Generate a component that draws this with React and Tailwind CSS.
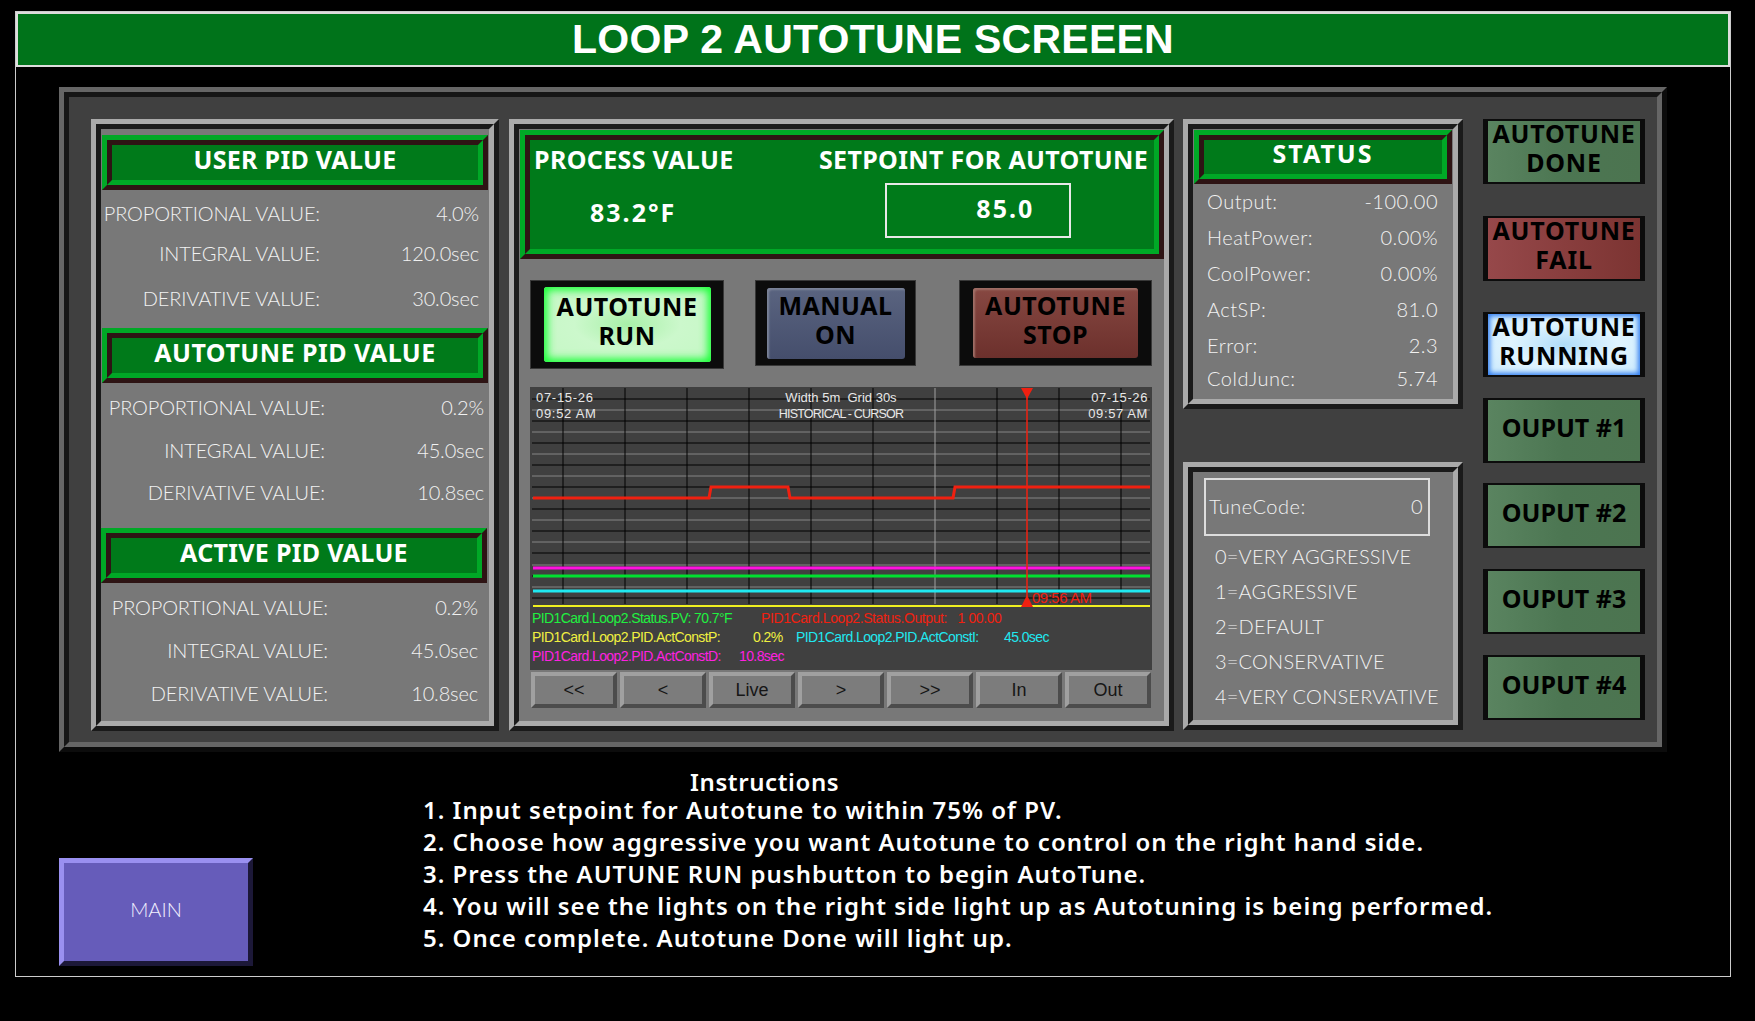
import React from "react";

const boldFont = "font-['Noto_Sans',sans-serif] font-bold";
const thinFont = "font-['Lato',sans-serif] font-light";

// Double bevel used by the gray panels
const GrayPanel = ({ className, children }) => (
  <div className={`border-[5px] border-t-[#aaaaaa] border-l-[#aaaaaa] border-r-[#1a1a1a] border-b-[#1a1a1a] ${className}`}>
    <div className="h-full border-[5px] border-t-[#1a1a1a] border-l-[#1a1a1a] border-r-[#aaaaaa] border-b-[#aaaaaa] bg-[#787878]">
      {children}
    </div>
  </div>
);

const GreenPanel = ({ className, children }) => (
  <div className={`border-[5px] border-t-[#00a826] border-l-[#00a826] border-r-[#2e1414] border-b-[#2e1414] ${className}`}>
    <div className="h-full border-[5px] border-t-[#2e1414] border-l-[#2e1414] border-r-[#00a826] border-b-[#00a826] bg-[#007a1a]">
      {children}
    </div>
  </div>
);

const GreenTitle = ({ className, children, tracking = "tracking-[0.3px]" }) => (
  <GreenPanel className={className}>
    <div className={`flex h-full items-center justify-center text-white text-[25px] leading-none pb-[7px] ${tracking} ${boldFont}`}>
      {children}
    </div>
  </GreenPanel>
);

const PidRow = ({ label, value, labelWidth, valueClass, className }) => (
  <div className={`flex items-center text-[#f2f2f2] text-[20px] tracking-[-0.15px] whitespace-nowrap ${thinFont} ${className}`}>
    <div className={`text-right ${labelWidth}`}>{label}</div>
    <div className={`flex-1 text-right ${valueClass}`}>{value}</div>
  </div>
);

const StatusRow = ({ label, value, className }) => (
  <div className={`flex items-center justify-between text-[#f2f2f2] text-[20px] tracking-[0.5px] pl-[4px] pr-[4px] ${thinFont} ${className}`}>
    <span>{label}</span>
    <span>{value}</span>
  </div>
);

const LeftColumn = () => (
  <GrayPanel className="w-[408px] h-[612px] shrink-0">
    <GreenTitle className="ml-[1px] mt-[6px] w-[386px] h-[55px]">USER PID VALUE</GreenTitle>
    <div className="pt-[3px] mb-[10px]">
      <PidRow className="h-[40px]" labelWidth="w-[219px]" valueClass="pr-[10px]" label="PROPORTIONAL VALUE:" value="4.0%" />
      <PidRow className="h-[40px]" labelWidth="w-[219px]" valueClass="pr-[10px]" label="INTEGRAL VALUE:" value="120.0sec" />
      <PidRow className="h-[40px] mt-[5px]" labelWidth="w-[219px]" valueClass="pr-[10px]" label="DERIVATIVE VALUE:" value="30.0sec" />
    </div>
    <GreenTitle className="ml-[1px] w-[386px] h-[55px]" tracking="tracking-[0.5px]">AUTOTUNE PID VALUE</GreenTitle>
    <div className="pt-[3px] mb-[15px]">
      <PidRow className="h-[42px]" labelWidth="w-[224px]" valueClass="pr-[5px]" label="PROPORTIONAL VALUE:" value="0.2%" />
      <PidRow className="h-[42px] mt-[1px]" labelWidth="w-[224px]" valueClass="pr-[5px]" label="INTEGRAL VALUE:" value="45.0sec" />
      <PidRow className="h-[42px]" labelWidth="w-[224px]" valueClass="pr-[5px]" label="DERIVATIVE VALUE:" value="10.8sec" />
    </div>
    <GreenTitle className="w-[386px] h-[55px]">ACTIVE PID VALUE</GreenTitle>
    <div className="pt-[3px]">
      <PidRow className="h-[42px]" labelWidth="w-[227px]" valueClass="pr-[11px]" label="PROPORTIONAL VALUE:" value="0.2%" />
      <PidRow className="h-[42px] mt-[1px]" labelWidth="w-[227px]" valueClass="pr-[11px]" label="INTEGRAL VALUE:" value="45.0sec" />
      <PidRow className="h-[42px] mt-[1px]" labelWidth="w-[227px]" valueClass="pr-[11px]" label="DERIVATIVE VALUE:" value="10.8sec" />
    </div>
  </GrayPanel>
);

const PushButton = ({ outer, inner, children }) => (
  <div className={`flex items-center justify-center bg-[#0c0c0c] border border-[#383838] ${outer}`}>
    <div className={`flex flex-col items-center justify-center rounded-[3px] text-black text-[25px] leading-[29px] tracking-[0.5px] ${boldFont} ${inner}`}>
      {children}
    </div>
  </div>
);

const vLines = [33, 95, 157, 219, 281, 343, 467, 529, 591];
const blackLines = [12, 34, 56, 78, 100, 122, 144, 166, 189, 211];
const grayLines = [23, 45, 67, 89, 111, 133, 155, 178, 200];

// Trend plot drawing, 622 x 221
const TrendPlot = () => (
  <svg width="622" height="221" className="block">
    <rect width="622" height="221" fill="#404040" />
    {blackLines.map((y) => <line key={y} x1="2" x2="620" y1={y} y2={y} stroke="#000000" />)}
    {grayLines.map((y) => <line key={y} x1="2" x2="620" y1={y} y2={y} stroke="#858585" />)}
    {vLines.map((x) => <line key={x} x1={x} x2={x} y1="1" y2="217" stroke="#000000" />)}
    <line x1="405" x2="405" y1="1" y2="217" stroke="#a0a0a0" />
    <polyline points="3,111 179,111 181,100 258,100 260,111 423,111 425,100 620,100" fill="none" stroke="#f02010" strokeWidth="3" />
    <line x1="3" x2="620" y1="181" y2="181" stroke="#ff10e0" strokeWidth="3" />
    <line x1="3" x2="620" y1="189" y2="189" stroke="#00e030" strokeWidth="3" />
    <line x1="3" x2="620" y1="204" y2="204" stroke="#20e8f0" strokeWidth="3" />
    <line x1="3" x2="620" y1="219" y2="219" stroke="#f0f020" strokeWidth="2" />
    <line x1="497" x2="497" y1="2" y2="218" stroke="#f02010" strokeWidth="1.5" />
    <polygon points="491,1 503,1 497,12" fill="#f02010" />
    <polygon points="491,220 503,220 497,208" fill="#f02010" />
  </svg>
);

const LegendText = ({ className, children }) => (
  <span className={`absolute whitespace-nowrap ${className}`}>{children}</span>
);

const Chart = () => (
  <div className="relative w-[622px] h-[283px] bg-[#404040] ml-[11px] font-['Liberation_Sans',sans-serif]">
    <TrendPlot />
    {/* text laid over the plot */}
    <div className="absolute left-[6px] top-[3px] text-[13px] leading-[16px] tracking-[0.7px] text-[#e8e8e8]">
      <div>07-15-26</div>
      <div>09:52 AM</div>
    </div>
    <div className="absolute left-[211px] w-[200px] top-[3px] text-center text-[13px] leading-[16px] text-[#e8e8e8]">
      <div>Width 5m&nbsp; Grid 30s</div>
      <div className="text-[12.5px] tracking-[-0.8px]">HISTORICAL - CURSOR</div>
    </div>
    <div className="absolute right-[4px] top-[3px] text-right text-[13px] leading-[16px] tracking-[0.6px] text-[#e8e8e8]">
      <div>07-15-26</div>
      <div>09:57 AM</div>
    </div>
    <LegendText className="left-[502px] top-[202px] text-[15px] leading-[18px] tracking-[-0.5px] text-[#f02010]">09:56 AM</LegendText>
    <div className="relative text-[14px] leading-[18px] tracking-[-0.6px]">
      <LegendText className="left-[2px] top-[1px] text-[#20f040]">PID1Card.Loop2.Status.PV: 70.7°F</LegendText>
      <LegendText className="left-[231px] top-[1px] tracking-[-0.4px] text-[#f02010]">PID1Card.Loop2.Status.Output:&nbsp;&nbsp; 1 00.00</LegendText>
      <LegendText className="left-[2px] top-[20px] text-[#f0f040]">PID1Card.Loop2.PID.ActConstP:</LegendText>
      <LegendText className="left-[223px] top-[20px] text-[#f0f040]">0.2%</LegendText>
      <LegendText className="left-[266px] top-[20px] text-[#20e8f0]">PID1Card.Loop2.PID.ActConstI:</LegendText>
      <LegendText className="left-[474px] top-[20px] text-[#20e8f0]">45.0sec</LegendText>
      <LegendText className="left-[2px] top-[39px] text-[#ff20e0]">PID1Card.Loop2.PID.ActConstD:</LegendText>
      <LegendText className="left-[209px] top-[39px] text-[#ff20e0]">10.8sec</LegendText>
    </div>
  </div>
);

const NavButton = ({ children }) => (
  <div className="flex items-center justify-center h-[36px] border-[4px] border-t-[#a0a0a0] border-l-[#a0a0a0] border-r-[#4c4c4c] border-b-[#4c4c4c] bg-[#7c7c7c] text-[#161616] text-[18px] font-['Liberation_Sans',sans-serif]">
    {children}
  </div>
);

const MiddleColumn = () => (
  <GrayPanel className="w-[665px] h-[612px] shrink-0 ml-[10px]">
    <GreenPanel className="w-[644px] h-[129px] mt-[1px] ml-[1px]">
      <div className="relative h-full text-white">
        <div className={`flex justify-between pl-[4px] pr-[6px] pt-[4px] text-[25px] leading-[30px] tracking-[0.35px] ${boldFont}`}>
          <span>PROCESS VALUE</span>
          <span>SETPOINT FOR AUTOTUNE</span>
        </div>
        <div className="flex mt-[9px]">
          <div className={`ml-[60px] mt-[14px] text-[25px] tracking-[2px] leading-[30px] ${boldFont}`}>83.2°F</div>
          <div className={`flex items-center justify-end ml-[209px] w-[186px] h-[55px] border-2 border-[#e8e8e8] pr-[35px] pb-[4px] text-[25px] tracking-[2px] ${boldFont}`}>85.0</div>
        </div>
      </div>
    </GreenPanel>
    <div className="flex items-start ml-[11px] mt-[21px] w-[622px]">
      <PushButton outer="w-[194px] h-[89px]" inner="w-[167px] h-[75px] pb-[8px] bg-[radial-gradient(ellipse_at_center,#a8f0a8_0%,#ccf8cc_45%,#c4f8c4_100%)] shadow-[inset_0_0_8px_3px_#10ff30]">
        <span>AUTOTUNE</span>
        <span>RUN</span>
      </PushButton>
      <PushButton outer="ml-[31px] w-[161px] h-[86px]" inner="w-[138px] h-[71px] pb-[6px] bg-gradient-to-b from-[#5a6480] to-[#454e6c] shadow-[inset_2px_2px_2px_#7c8498]">
        <span>MANUAL</span>
        <span>ON</span>
      </PushButton>
      <PushButton outer="ml-[43px] w-[193px] h-[86px]" inner="w-[165px] h-[70px] pb-[6px] bg-gradient-to-b from-[#874842] to-[#6c302c] shadow-[inset_2px_2px_2px_#a07068]">
        <span>AUTOTUNE</span>
        <span>STOP</span>
      </PushButton>
    </div>
    <div className="mt-[18px]">
      <Chart />
    </div>
    <div className="grid grid-cols-7 gap-x-[3px] ml-[12px] mt-[2px] w-[620px]">
      <NavButton>&lt;&lt;</NavButton>
      <NavButton>&lt;</NavButton>
      <NavButton>Live</NavButton>
      <NavButton>&gt;</NavButton>
      <NavButton>&gt;&gt;</NavButton>
      <NavButton>In</NavButton>
      <NavButton>Out</NavButton>
    </div>
  </GrayPanel>
);

const RightColumn = () => (
  <div className="w-[280px] shrink-0 ml-[9px]">
    <GrayPanel className="h-[290px]">
      <GreenTitle className="ml-[1px] mt-[1px] w-[258px] h-[54px]" tracking="tracking-[2px]">STATUS</GreenTitle>
      <div className="pl-[10px] pr-[11px]">
        <StatusRow className="h-[36px] -mt-[1px]" label="Output:" value="-100.00" />
        <StatusRow className="h-[36px]" label="HeatPower:" value="0.00%" />
        <StatusRow className="h-[36px]" label="CoolPower:" value="0.00%" />
        <StatusRow className="h-[36px]" label="ActSP:" value="81.0" />
        <StatusRow className="h-[36px]" label="Error:" value="2.3" />
        <StatusRow className="h-[30px]" label="ColdJunc:" value="5.74" />
      </div>
    </GrayPanel>
    <GrayPanel className="h-[268px] mt-[53px]">
      <div className={`flex items-center justify-between ml-[11px] mt-[6px] w-[226px] h-[58px] border-2 border-[#dddddd] pl-[3px] pr-[5px] pb-[3px] text-[#f2f2f2] text-[20px] tracking-[0.5px] ${thinFont}`}>
        <span>TuneCode:</span>
        <span>0</span>
      </div>
      <div className={`ml-[22px] mt-[2px] text-[#f2f2f2] text-[20px] tracking-[0.2px] whitespace-nowrap ${thinFont}`}>
        <div className="flex items-center h-[35px]">0=VERY AGGRESSIVE</div>
        <div className="flex items-center h-[35px]">1=AGGRESSIVE</div>
        <div className="flex items-center h-[35px]">2=DEFAULT</div>
        <div className="flex items-center h-[35px]">3=CONSERVATIVE</div>
        <div className="flex items-center h-[35px]">4=VERY CONSERVATIVE</div>
      </div>
    </GrayPanel>
  </div>
);

const Lamp = ({ className, fill, lines, tracking }) => (
  <div className={`flex flex-col items-center justify-center h-[65px] border-y-[2px] border-x-[5px] border-[#0c0c0c] text-black text-[25px] leading-[29px] pb-[7px] ${boldFont} ${tracking} ${fill} ${className}`}>
    {lines.map((line) => <span key={line}>{line}</span>)}
  </div>
);

const greenFill = "bg-gradient-to-r from-[#5a8460] via-[#4c7652] to-[#4c7450]";

const LampColumn = () => (
  <div className="w-[162px] shrink-0 ml-[20px]">
    <Lamp tracking="tracking-[0.8px]" fill={greenFill} lines={["AUTOTUNE", "DONE"]} />
    <Lamp tracking="tracking-[0.8px]" className="mt-[32px]" fill="bg-gradient-to-r from-[#96484a] to-[#7c3432]" lines={["AUTOTUNE", "FAIL"]} />
    <Lamp tracking="tracking-[0.8px]" className="mt-[31px]" fill="bg-[radial-gradient(ellipse_at_center,#b0dcf8_0%,#e0f4ff_50%,#c8e8fc_100%)] shadow-[inset_0_0_5px_2px_#2f7cf0]" lines={["AUTOTUNE", "RUNNING"]} />
    <Lamp className="mt-[21px]" fill={greenFill} lines={["OUPUT #1"]} />
    <Lamp className="mt-[20px]" fill={greenFill} lines={["OUPUT #2"]} />
    <Lamp className="mt-[21px]" fill={greenFill} lines={["OUPUT #3"]} />
    <Lamp className="mt-[21px]" fill={greenFill} lines={["OUPUT #4"]} />
  </div>
);

const steps = [
  "1. Input setpoint for Autotune to within 75% of PV.",
  "2. Choose how aggressive you want Autotune to control on the right hand side.",
  "3. Press the AUTUNE RUN pushbutton to begin AutoTune.",
  "4. You will see the lights on the right side light up as Autotuning is being performed.",
  "5. Once complete. Autotune Done will light up.",
];

const App = () => {
  return (
    <div className="w-[1755px] h-[1021px] bg-black overflow-hidden pt-[11px] pl-[15px]">
      <div className="w-[1716px] h-[966px] border border-[#cccccc]">
        {/* Title bar */}
        <div className="flex items-center justify-center h-[55px] border-2 border-[#dddddd] bg-[#00731a] text-white text-[41px] tracking-[0.25px] font-bold font-['Liberation_Sans',sans-serif]">
          LOOP 2 AUTOTUNE SCREEEN
        </div>

        {/* Main panel */}
        <div className="ml-[43px] mt-[20px] w-[1608px] h-[665px] border-[5px] border-t-[#666666] border-l-[#666666] border-r-[#0c0c0c] border-b-[#0c0c0c]">
          <div className="flex h-full border-[5px] border-t-[#161616] border-l-[#161616] border-r-[#666666] border-b-[#666666] bg-[#404040] pl-[22px] pt-[22px]">
            <LeftColumn />
            <MiddleColumn />
            <RightColumn />
            <LampColumn />
          </div>
        </div>

        {/* Bottom section */}
        <div className="flex ml-[43px]">
          <div className="flex items-center justify-center mt-[106px] w-[194px] h-[108px] border-[5px] border-t-[#9a90f0] border-l-[#9a90f0] border-r-[#1c1838] border-b-[#1c1838] bg-[#665cba] text-[#f2f1ff] text-[20px] pb-[6px] font-light font-['Lato',sans-serif]">
            MAIN
          </div>
          <div className="ml-[170px] mt-[18px] text-white text-[24px] tracking-[1px] font-['Noto_Sans',sans-serif] font-semibold">
            <div className="h-[24px] leading-[24px] ml-[267px] tracking-[0.6px]">Instructions</div>
            {steps.map((step) => (
              <div key={step} className="h-[32px] leading-[32px] whitespace-nowrap">{step}</div>
            ))}
          </div>
        </div>
      </div>
    </div>
  );
};

export default App;
